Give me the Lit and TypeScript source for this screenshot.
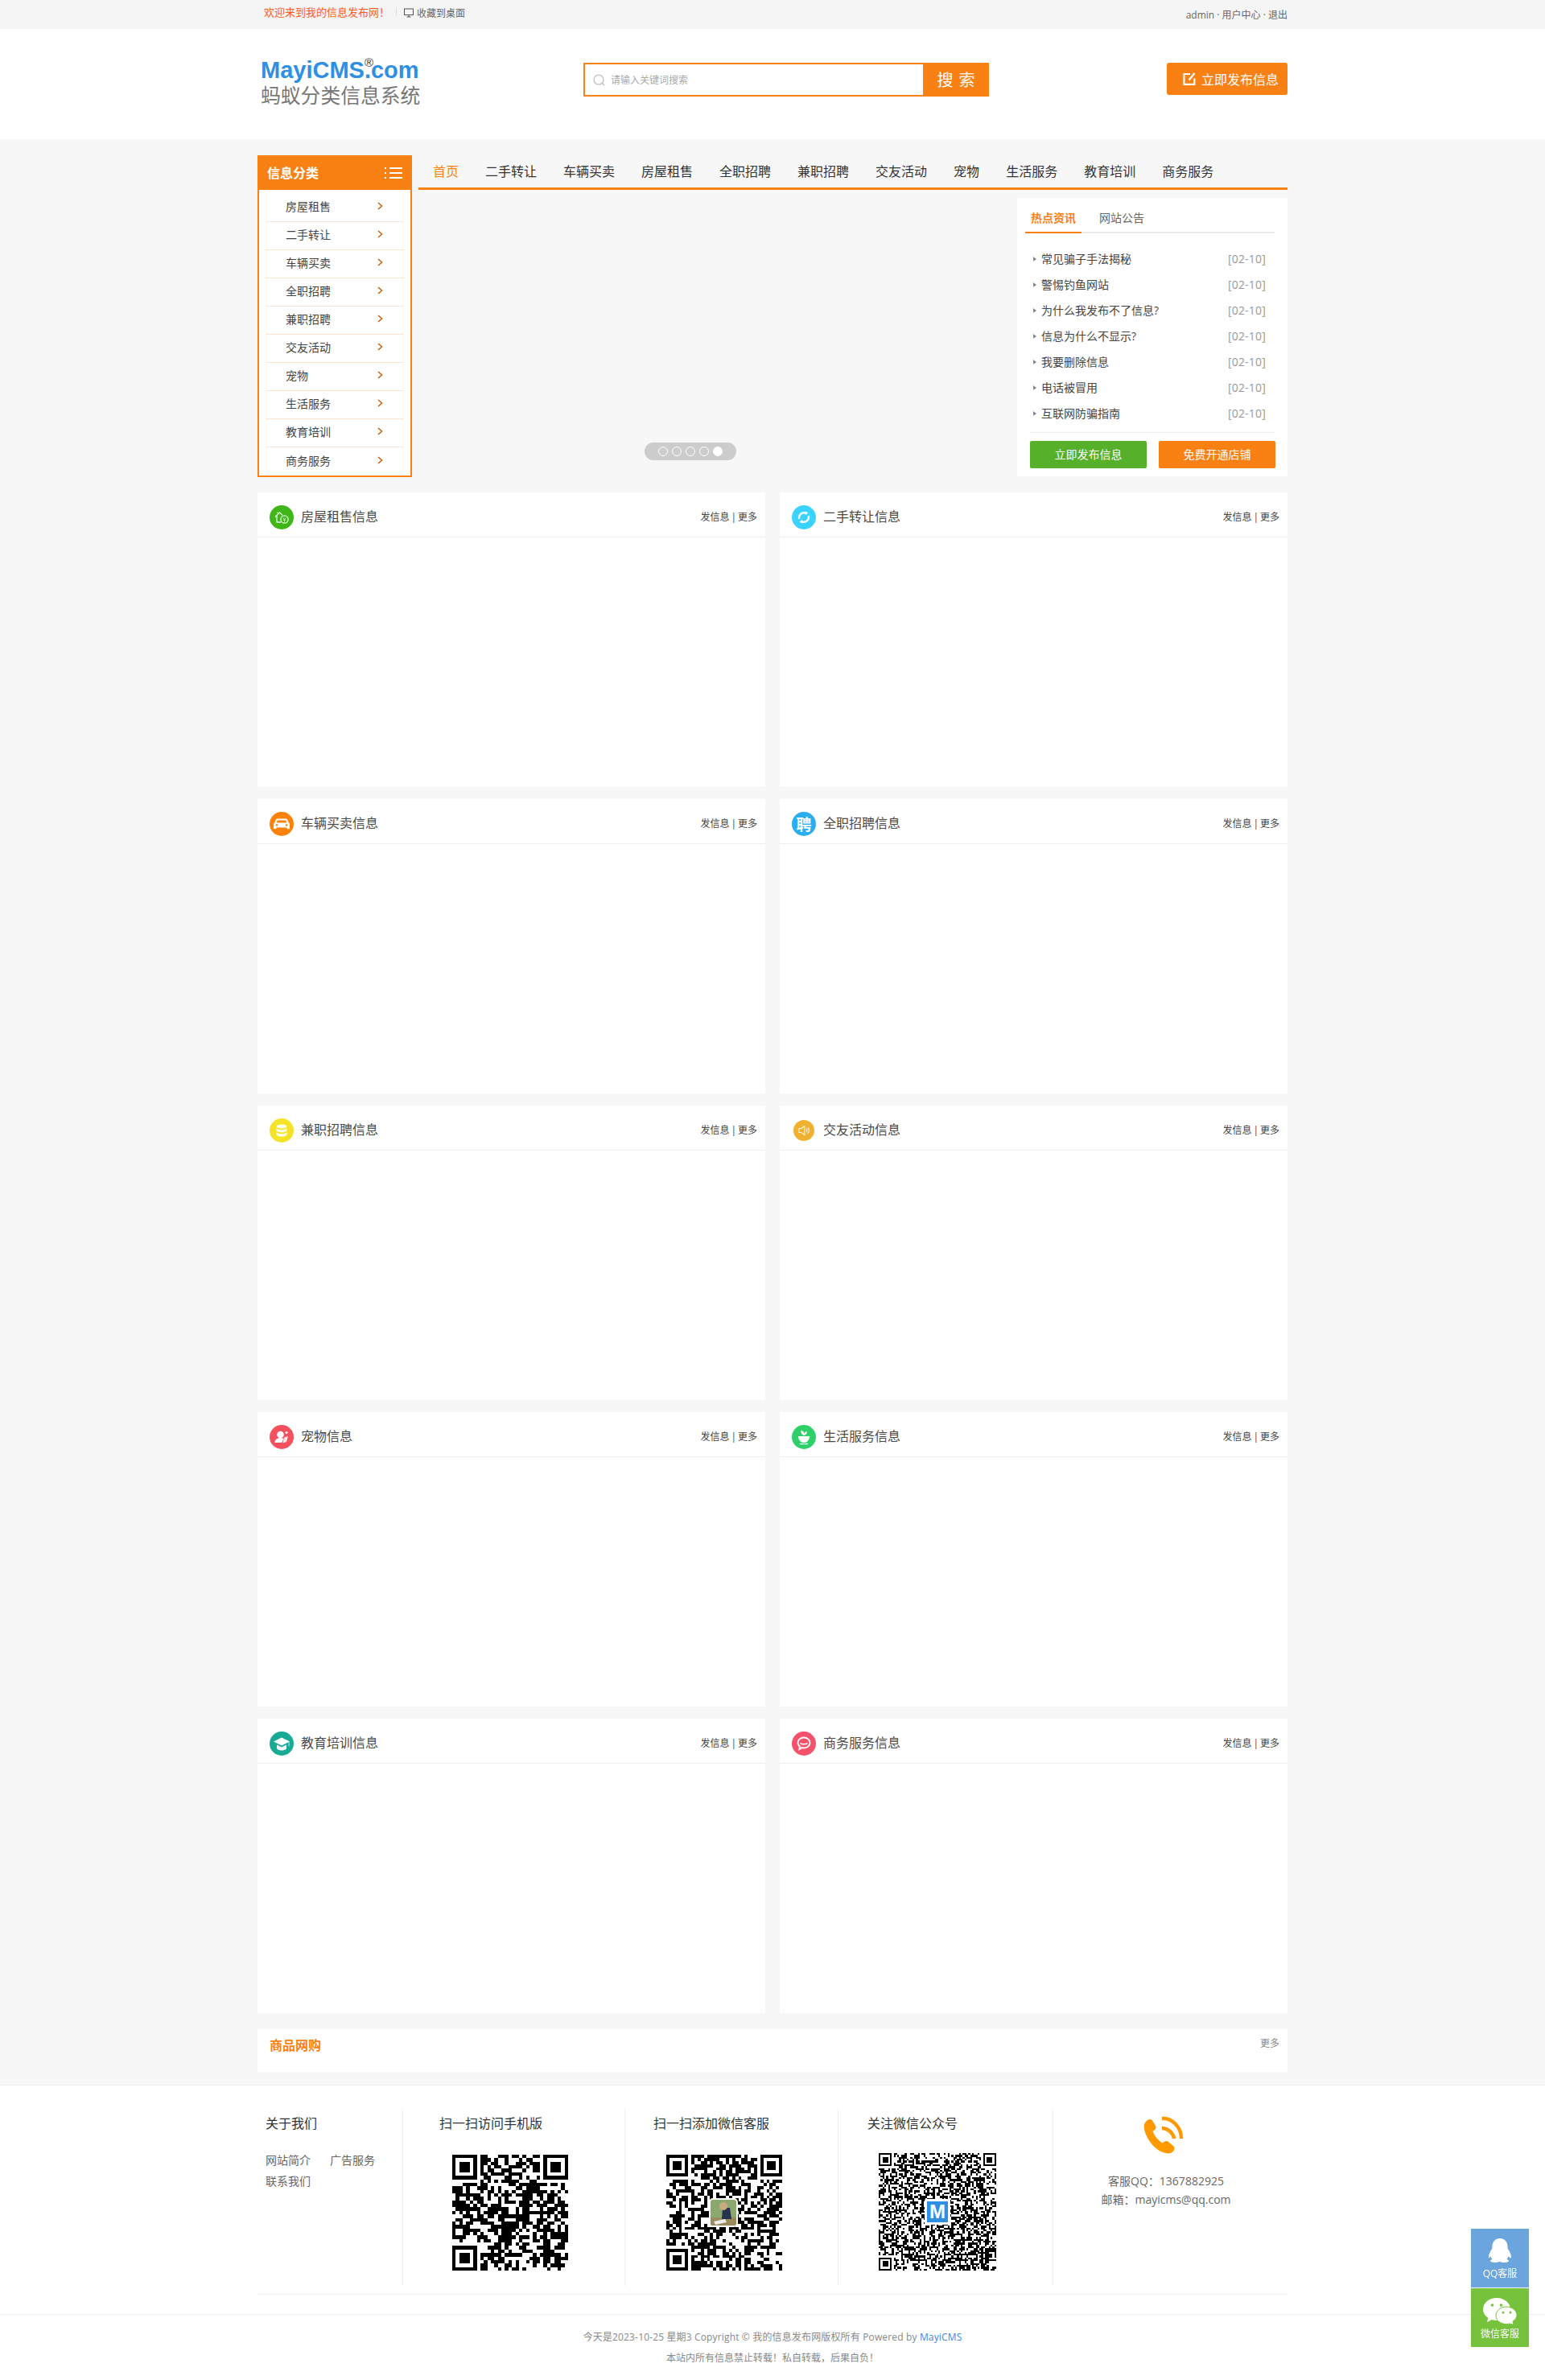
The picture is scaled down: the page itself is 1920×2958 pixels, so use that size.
import { LitElement, html, css, svg } from "lit";
import { customElement } from "lit/decorators.js";

function qrPath(n: number, seed: number, density = 0.5): string {
  let s = seed >>> 0;
  const rnd = () => {
    s = (s + 0x6d2b79f5) >>> 0;
    let t = s;
    t = Math.imul(t ^ (t >>> 15), t | 1);
    t ^= t + Math.imul(t ^ (t >>> 7), t | 61);
    return ((t ^ (t >>> 14)) >>> 0) / 4294967296;
  };
  let d = "";
  const inFinder = (x: number, y: number) =>
    (x < 8 && y < 8) || (x >= n - 8 && y < 8) || (x < 8 && y >= n - 8);
  for (let y = 0; y < n; y++) {
    for (let x = 0; x < n; x++) {
      if (inFinder(x, y)) continue;
      if (rnd() < density) d += `M${x} ${y}h1v1h-1z`;
    }
  }
  const finder = (fx: number, fy: number) => {
    d += `M${fx} ${fy}h7v1h-7zM${fx} ${fy + 6}h7v1h-7zM${fx} ${fy + 1}h1v5h-1zM${fx + 6} ${fy + 1}h1v5h-1zM${fx + 2} ${fy + 2}h3v3h-3z`;
  };
  finder(0, 0);
  finder(n - 7, 0);
  finder(0, n - 7);
  return d;
}

const navItems = ["首页", "二手转让", "车辆买卖", "房屋租售", "全职招聘", "兼职招聘", "交友活动", "宠物", "生活服务", "教育培训", "商务服务"];
const sideItems = ["房屋租售", "二手转让", "车辆买卖", "全职招聘", "兼职招聘", "交友活动", "宠物", "生活服务", "教育培训", "商务服务"];
const news = ["常见骗子手法揭秘", "警惕钓鱼网站", "为什么我发布不了信息?", "信息为什么不显示?", "我要删除信息", "电话被冒用", "互联网防骗指南"];

const cardIcons: Record<string, unknown> = {
  house: svg`<g fill="none" stroke="#fff" stroke-width="1.3" opacity=".85"><path d="M7 14.5 12.5 9l3.5 3.4M9 13v8h5"/><path d="M10 10V8.4"/><circle cx="18.5" cy="17.5" r="4.6"/><path d="M16.8 15.5l1.7 2 1.7-2M18.5 17.5v3M16.8 18.3h3.4" stroke-width=".9"/></g>`,
  sync: svg`<g fill="none" stroke="#fff" stroke-width="2.4" opacity=".95"><path d="M9.3 17a6 6 0 0 1 8.5-7"/><path d="M20.7 13a6 6 0 0 1-8.5 7"/></g><path d="M16.4 7.6l4 1.6-3 3zM13.6 22.4l-4-1.6 3-3z" fill="#fff"/>`,
  car: svg`<path d="M9.5 8.5h11c.8 0 1.3.4 1.6 1l1.6 4c1 .6 1.3 1.2 1.3 2.2v4.8c0 .5-.3.8-.8.8h-1.9c-.5 0-.8-.3-.8-.8v-1H8.500v1c0 .5-.3.8-.8.8H5.800c-.5 0-.8-.3-.8-.8v-4.800c0-1 .3-1.600 1.300-2.200l1.600-4c.3-.6.8-1 1.600-1zM9.800 10.500l-1.200 3h12.800l-1.200-3z" fill="#fff" fill-rule="evenodd"/><circle cx="9" cy="16.500" r="1.300" fill="#ff8208"/><circle cx="21" cy="16.500" r="1.300" fill="#ff8208"/>`,
  db: svg`<g fill="#fff" opacity=".92"><ellipse cx="15" cy="10" rx="6.500" ry="2.600"/><path d="M8.500 12.200c1 1.300 3.500 2 6.500 2s5.500-.7 6.500-2v2.600c0 1.500-2.900 2.600-6.500 2.600s-6.500-1.100-6.500-2.600z"/><path d="M8.500 17.200c1 1.300 3.500 2 6.500 2s5.500-.7 6.500-2v2.800c0 1.500-2.900 2.600-6.500 2.600s-6.500-1.100-6.500-2.600z"/></g>`,
  speaker: svg`<g fill="none" stroke="#fff" stroke-width="1.200" opacity=".9"><path d="M8 12h3.500L16 8.500v13L11.500 18H8z"/><path d="M18.500 12.500a4 4 0 0 1 0 5M20.500 10.500a7 7 0 0 1 0 9"/></g>`,
  pet: svg`<g fill="#fff"><circle cx="13.500" cy="12" r="4.300"/><path d="M6.500 22c0-3.800 3-6 7-6 1.500 0 2.800.3 3.800.9l-2 5.100z"/><path d="M18 15.500l5-1.500-2 7-4.500 1.500z" opacity=".85"/><circle cx="21" cy="9.500" r="1.600"/></g>`,
  life: svg`<g fill="#fff"><path d="M8 14h14c0 4-2.500 7-5 8h-4c-2.500-1-5-4-5-8z"/><path d="M15 13c-3-1-4-3.500-3.500-6 2.500.3 4 2 4 4 .5-1.500 1.700-2.500 3.500-2.700 0 2.200-1.200 4-4 4.700z"/><path d="M10 23h10v1.200H10z"/></g>`,
  edu: svg`<path d="M15 7.500 25 12.500l-10 5-10-5z" fill="#fff"/><path d="M9 16.500v4c0 1.700 2.700 3 6 3s6-1.300 6-3v-4l-6 3z" fill="#fff"/><path d="M24 13v5.500" stroke="#bfeee6" stroke-width="1"/>`,
  biz: svg`<g fill="none" stroke="#fff" stroke-width="1.900"><path d="M7.500 14a7.500 6.500 0 0 1 15 0c0 3.600-3.400 6.500-7.500 6.500-1 0-1.800-.1-2.700-.4L9.500 22l.3-3.500C8.400 17.300 7.500 15.800 7.500 14z"/></g><path d="M10.500 14.500c1.500 1.800 7.500 1.800 9 0" fill="none" stroke="#fff" stroke-width="1.500"/>`,
};

const cards: { title: string; color: string; icon?: string; char?: string; small?: boolean }[] = [
  { title: "房屋租售信息", color: "#3fb618", icon: "house" },
  { title: "二手转让信息", color: "#3ad2ff", icon: "sync" },
  { title: "车辆买卖信息", color: "#ff8208", icon: "car" },
  { title: "全职招聘信息", color: "#2aaef0", char: "聘" },
  { title: "兼职招聘信息", color: "#f5e328", icon: "db" },
  { title: "交友活动信息", color: "#f0b030", icon: "speaker", small: true },
  { title: "宠物信息", color: "#f4505e", icon: "pet" },
  { title: "生活服务信息", color: "#2fd06a", icon: "life" },
  { title: "教育培训信息", color: "#17ab96", icon: "edu" },
  { title: "商务服务信息", color: "#f4526a", icon: "biz" },
];

const qr1 = qrPath(33, 11, 0.56);
const qr2 = qrPath(37, 27, 0.52);
const qr3 = qrPath(63, 93, 0.5);

@customElement("app-root")
export class AppRoot extends LitElement {
  static styles = css`
    :host {
      display: block;
      background: #f7f7f7;
      font-family: "Open Sans", "Noto Sans CJK SC", sans-serif;
      font-size: 12px;
      color: #444;
    }
    * { box-sizing: border-box; }
    .wrap { width: 1280px; margin: 0 auto; }
    .topbar { height: 36px; background: #f5f5f5; }
    .topbar .wrap { display: flex; height: 36px; }
    .welcome { margin-left: 8px; font-size: 13px; line-height: 30px; color: #ff5a22; width: 164px; }
    .sep { width: 1px; height: 10px; background: #ddd; margin-top: 9px; }
    .fav { display: flex; align-items: center; height: 32px; margin-left: 9px; color: #666; gap: 4px; }
    .fav svg { width: 12px; height: 12px; }
    .user { margin-left: auto; line-height: 38px; color: #666; white-space: nowrap; }
    .header { height: 137px; background: #fff; }
    .header .wrap { display: flex; align-items: flex-start; padding-top: 34px; }
    .logo { width: 405px; padding-left: 4px; }
    .logo-en { font-family: "Liberation Sans", sans-serif; font-size: 29px; font-weight: 700; color: #2f8fe3; line-height: 34px; white-space: nowrap; position: relative; }
    .reg { position: absolute; left: 129px; top: -9px; font-size: 15px; font-weight: 400; color: #333; }
    .logo-cn { font-size: 24.8px; line-height: 28px; color: #777; white-space: nowrap; }
    .search { display: flex; width: 504px; height: 42px; margin-top: 8px; border: 2px solid #f98114; background: #fff; }
    .search-in { flex: 1; display: flex; align-items: center; padding-left: 10px; gap: 7px; color: #aaa; }
    .search-in svg { width: 15px; height: 15px; }
    .search-btn { width: 80px; background: #f98114; color: #fff; font-size: 20px; letter-spacing: 1px; display: flex; align-items: center; justify-content: center; padding: 0 0 2px 3px; }
    .publish { margin-left: auto; margin-top: 8px; width: 150px; height: 40px; border-radius: 3px; background: #f98114; color: #fff; font-size: 16px; display: flex; align-items: center; padding: 0 0 1px 20px; gap: 7px; white-space: nowrap; }
    .publish svg { width: 16px; height: 16px; }

    .hero { display: flex; gap: 8px; margin-top: 20px; }
    .side { width: 192px; height: 400px; border: 2px solid #f98114; background: #fff; flex: none; }
    .side-head { margin: -2px -2px 0; height: 43px; background: #f98114; color: #fff; display: flex; align-items: center; justify-content: space-between; padding: 0 12px 1px; font-size: 16px; font-weight: 700; }
    .side-head svg { width: 22px; height: 14px; margin-top: 2px; }
    .side-list { padding-top: 5px; }
    .side-item { height: 35px; margin: 0 8px; border-bottom: 1px solid #fbe3cc; display: flex; align-items: center; justify-content: space-between; padding: 0 26px 4px 25px; font-size: 14px; color: #444; }
    .side-item:last-child { border-bottom: 0; }
    .side-item svg { width: 7px; height: 10px; }
    .hero-main { flex: 1; min-width: 0; }
    .nav { height: 43px; border-bottom: 3px solid #f98114; display: flex; gap: 33px; padding: 0 0 2px 18px; align-items: center; font-size: 16px; color: #333; }
    .nav .on { color: #f98114; }
    .under { display: flex; margin-top: 10px; height: 346px; }
    .banner { flex: 1; position: relative; }
    .dots { position: absolute; left: 281px; top: 304px; width: 114px; height: 22px; border-radius: 11px; background: #ccc; display: flex; justify-content: center; align-items: center; gap: 5px; }
    .dots i { width: 12px; height: 12px; border-radius: 50%; border: 1px solid #fff; }
    .dots i.on { background: #fff; }
    .panel { width: 336px; background: #fff; }
    .tabs { height: 44px; margin: 0 16px 0 10px; border-bottom: 2px solid #e8e8e8; display: flex; gap: 15px; font-size: 14px; color: #666; }
    .tab { width: 70px; height: 44px; line-height: 50px; text-align: center; }
    .tab.on { color: #f98114; font-weight: 700; border-bottom: 2px solid #f98114; }
    .news { margin: 16px 0 7px; }
    .news-row { height: 32px; display: flex; align-items: center; padding: 0 27px 2px 20px; font-size: 14px; color: #444; }
    .news-row i { width: 0; height: 0; border-left: 4px solid #888; border-top: 3px solid transparent; border-bottom: 3px solid transparent; margin: 2px 6px 0 0; }
    .news-row b { font-weight: 400; margin-left: auto; color: #999; letter-spacing: .2px; }
    .btns { width: 306px; margin: 0 15px; border-top: 1px solid #eee; padding: 10px 0 0 1px; display: flex; justify-content: space-between; }
    .btn { width: 145px; height: 34px; border-radius: 2px; color: #fff; font-size: 14px; display: flex; align-items: center; justify-content: center; background: #f98114; padding-bottom: 2px; }
    .btn.g { background: #56b02a; }
    .grid { display: grid; grid-template-columns: 631px 631px; column-gap: 18px; row-gap: 15px; margin-top: 19px; }
    .card { height: 366px; background: #fff; }
    .card-head { height: 56px; border-bottom: 1px solid #eee; display: flex; align-items: center; padding: 6px 10px 0 15px; }
    .ico { width: 30px; height: 30px; border-radius: 50%; display: flex; align-items: center; justify-content: center; color: #fff; font-size: 19px; font-weight: 700; flex: none; }
    .ico svg { width: 30px; height: 30px; display: block; }
    .ico.small { width: 26px; height: 26px; margin: 0 2px; }
    .ico.small svg { width: 26px; height: 26px; }
    .card-title { margin: -3px 0 0 9px; font-size: 16px; color: #4a4a4a; }
    .card-more { margin: -2px 0 0 auto; color: #444; white-space: nowrap; word-spacing: -1.200px; }
    .shop { height: 53px; margin-top: 20px; background: #fff; display: flex; justify-content: space-between; padding: 0 10px 15px 15px; align-items: center; }
    .shop-t { font-size: 16px; font-weight: 700; color: #f98114; }
    .shop-m { color: #888; margin-top: -4px; }
    .footer { margin-top: 16px; background: #fff; border-top: 1px solid #eee; padding-top: 29px; }
    .cols { display: flex; height: 220px; }
    .col { border-right: 1px solid #eee; flex: none; }
    .c1 { width: 181px; padding-left: 10px; }
    .c2 { width: 276px; }
    .c3 { width: 265px; }
    .c4 { width: 267px; }
    .c5 { flex: 1; border-right: 0; display: flex; flex-direction: column; align-items: center; color: #666; font-size: 14px; line-height: 23px; padding: 9px 11px 0 0; }
    .c5 svg { width: 50px; height: 49px; margin: 0 6px 20px 0; }
    .col-t { font-size: 16px; color: #333; line-height: 36px; white-space: nowrap; }
    .links { display: flex; flex-wrap: wrap; width: 150px; column-gap: 24px; font-size: 14px; line-height: 26px; color: #666; margin-top: 15px; }
    .qr { position: relative; display: block; width: 144px; height: 144px; }
    .qr svg { width: 100%; height: 100%; display: block; }
    .c2 .col-t { padding-left: 45px; }
    .c2 .qr { margin: 21px 0 0 61px; }
    .c3 .col-t { padding-left: 35px; }
    .c3 .qr { margin: 21px 0 0 51px; }
    .c4 .col-t { padding-left: 36px; }
    .c4 .qr { margin: 19px 0 0 50px; width: 146px; height: 146px; }
    .avatar { position: absolute; left: 53px; top: 54px; width: 36px; height: 36px; border-radius: 5px; border: 2px solid #fff; overflow: hidden; background: #fff; }
    .avatar svg { width: 100%; height: 100%; }
    .mlogo { position: absolute; left: 57px; top: 57px; width: 32px; height: 32px; border: 3px solid #fff; border-radius: 2px; background: #2f8fe3; color: #fff; font-size: 24px; font-weight: 700; line-height: 26px; text-align: center; font-family: "Liberation Sans", sans-serif; }
    .rule { height: 1px; background: #eee; margin-top: 10px; }
    .copy { margin-top: 24px; border-top: 1px solid #eee; padding: 15px 0 14px; text-align: center; color: #888; line-height: 26px; }
    .copy-main { letter-spacing: .15px; }
    .copy a { color: #3b86e8; text-decoration: none; }
    .float { position: fixed; right: 20px; bottom: 41px; width: 72px; display: flex; flex-direction: column; gap: 1px; color: #fff; }
    .fl { height: 73px; display: flex; flex-direction: column; align-items: center; color: #fff; }
    .fl.q { background: #6ba5dd; padding-top: 12px; gap: 4px; }
    .fl.w { background: #76c23d; padding-top: 12px; gap: 2px; }
    .fl.q svg { width: 28px; height: 30px; }
    .fl.w svg { width: 42px; height: 33px; }
  `;

  render() {
    return html`
      <div class="topbar"><div class="wrap">
        <div class="welcome">欢迎来到我的信息发布网！</div>
        <div class="sep"></div>
        <div class="fav">
          <svg viewBox="0 0 12 12" fill="none" stroke="#555" stroke-width="1"><rect x=".5" y="1" width="11" height="7.500"/><path d="M6 8.500V11M3.500 11h5"/></svg>
          <span>收藏到桌面</span>
        </div>
        <div class="user">admin · 用户中心 · 退出</div>
      </div></div>

      <div class="header"><div class="wrap">
        <div class="logo">
          <div class="logo-en">MayiCMS<span class="reg">®</span>.com</div>
          <div class="logo-cn">蚂蚁分类信息系统</div>
        </div>
        <div class="search">
          <div class="search-in">
            <svg viewBox="0 0 15 15" fill="none" stroke="#bbb" stroke-width="1.200"><circle cx="7" cy="7" r="6"/><path d="M11.300 11.300 14 14"/></svg>
            <span>请输入关键词搜索</span>
          </div>
          <div class="search-btn">搜 索</div>
        </div>
        <div class="publish">
          <svg viewBox="0 0 16 16" fill="none" stroke="#fff" stroke-width="2.200"><path d="M9 2H1.500v12.800h12.800V7.500"/><path d="M7.500 9.500 14.500 1"/></svg>
          <span>立即发布信息</span>
        </div>
      </div></div>

      <div class="wrap">
        <div class="hero">
          <div class="side">
            <div class="side-head">
              <span>信息分类</span>
              <svg viewBox="0 0 22 14" fill="#fff"><rect x="0" y="0" width="2" height="2"/><rect x="0" y="6" width="2" height="2"/><rect x="0" y="12" width="2" height="2"/><rect x="6" y="0" width="16" height="2"/><rect x="6" y="6" width="16" height="2"/><rect x="6" y="12" width="16" height="2"/></svg>
            </div>
            <div class="side-list">
              ${sideItems.map(
                (t) => html`<div class="side-item"><span>${t}</span>
                  <svg viewBox="0 0 7 10" fill="none" stroke="#c8600f" stroke-width="1.500"><path d="M1 1l4.500 4L1 9"/></svg></div>`
              )}
            </div>
          </div>
          <div class="hero-main">
            <div class="nav">
              ${navItems.map((t, i) => html`<span class=${i === 0 ? "on" : ""}>${t}</span>`)}
            </div>
            <div class="under">
              <div class="banner">
                <div class="dots"><i></i><i></i><i></i><i></i><i class="on"></i></div>
              </div>
              <div class="panel">
                <div class="tabs">
                  <div class="tab on">热点资讯</div>
                  <div class="tab">网站公告</div>
                </div>
                <div class="news">
                  ${news.map((t) => html`<div class="news-row"><i></i><span>${t}</span><b>[02-10]</b></div>`)}
                </div>
                <div class="btns">
                  <div class="btn g">立即发布信息</div>
                  <div class="btn">免费开通店铺</div>
                </div>
              </div>
            </div>
          </div>
        </div>

        <div class="grid">
          ${cards.map(
            (c) => html`<div class="card">
              <div class="card-head">
                <div class="ico ${c.small ? "small" : ""}" style="background:${c.color}">
                  ${c.char ? c.char : html`<svg viewBox="0 0 30 30">${cardIcons[c.icon!]}</svg>`}
                </div>
                <div class="card-title">${c.title}</div>
                <div class="card-more">发信息 | 更多</div>
              </div>
            </div>`
          )}
        </div>

        <div class="shop">
          <div class="shop-t">商品网购</div>
          <div class="shop-m">更多</div>
        </div>
      </div>

      <div class="footer">
        <div class="wrap">
          <div class="cols">
            <div class="col c1">
              <div class="col-t">关于我们</div>
              <div class="links"><span>网站简介</span><span>广告服务</span><span>联系我们</span></div>
            </div>
            <div class="col c2">
              <div class="col-t">扫一扫访问手机版</div>
              <div class="qr"><svg viewBox="0 0 33 33" shape-rendering="crispEdges"><path d=${qr1}></path></svg></div>
            </div>
            <div class="col c3">
              <div class="col-t">扫一扫添加微信客服</div>
              <div class="qr">
                <svg viewBox="0 0 37 37" shape-rendering="crispEdges"><path d=${qr2}></path></svg>
                <div class="avatar">
                  <svg viewBox="0 0 32 32"><rect width="32" height="32" fill="#8aa870"></rect><rect y="22" width="32" height="10" fill="#9b8a5c"></rect><path d="M15 10h9l2 14H14z" fill="#26324f"></path><circle cx="16" cy="8" r="5" fill="#c9ab82"></circle><path d="M4 27l14-3 2 4-14 3z" fill="#eee"></path></svg>
                </div>
              </div>
            </div>
            <div class="col c4">
              <div class="col-t">关注微信公众号</div>
              <div class="qr">
                <svg viewBox="0 0 63 63" shape-rendering="crispEdges"><path d=${qr3}></path></svg>
                <div class="mlogo">M</div>
              </div>
            </div>
            <div class="col c5">
              <svg viewBox="0 0 50 49" fill="#f90">
                <path d="M5 5c2-1.500 4.500-1.500 6 .5l4 6.500c1 1.800.5 3.800-1 5l-2.500 2c2 5.500 6.500 11 12 14.500l2.500-1.800c1.500-1 3.500-1 5 .3l6.500 5.500c1.500 1.500 1.500 4-.3 6-2.500 2.500-5.500 3.500-9 2.500C15 44 2.500 28 .8 14.500.3 10.500 2 7 5 5z"></path>
                <path d="M23 3c12-1 24 10 24 25M23 15c6 0 14 5 15 13" fill="none" stroke="#f90" stroke-width="4.500"></path>
              </svg>
              <div>客服QQ：1367882925</div>
              <div>邮箱：mayicms@qq.com</div>
            </div>
          </div>
          <div class="rule"></div>
        </div>
        <div class="copy">
          <div class="copy-main">今天是2023-10-25 星期3 Copyright © 我的信息发布网版权所有 Powered by <a>MayiCMS</a></div>
          <div>本站内所有信息禁止转载！私自转载，后果自负！</div>
        </div>
      </div>

      <div class="float">
        <div class="fl q">
          <svg viewBox="0 0 28 30" fill="#fff"><path d="M14 0c6 0 9.500 4.500 9.500 10 0 1.500.2 2.500 1 4 1.500 2.500 3.500 6 3.500 9 0 1.500-.8 1.800-2 .8-.5-.4-1-1-1.400-1.600-.4 1.500-1.200 2.800-2.200 3.800 1.500.5 2.600 1.200 2.600 2 0 1.200-3 2-6 2-2 0-3.500-.4-4.500-1-.5.100-1.500.100-2 0-1 .6-2.500 1-4.500 1-3 0-6-.8-6-2 0-.8 1.100-1.500 2.600-2-1-1-1.800-2.300-2.200-3.800-.4.600-.9 1.200-1.400 1.600C1 24.800 0 24.500 0 23c0-3 2-6.500 3.500-9 .8-1.500 1-2.500 1-4C4.500 4.500 8 0 14 0z"></path></svg>
          <span>QQ客服</span>
        </div>
        <div class="fl w">
          <svg viewBox="0 0 42 33">
            <path d="M17 0C7.700 0 0 6.200 0 14c0 4.400 2.500 8.300 6.300 10.900L5 30l6-3c2 .6 3.900 1 6 1 9.300 0 17-6.300 17-14S26.300 0 17 0z" fill="#fff"></path>
            <circle cx="11.500" cy="9" r="1.800" fill="#76c23d"></circle><circle cx="22.500" cy="9" r="1.800" fill="#76c23d"></circle>
            <path d="M29 11c-7.200 0-13 5-13 11s5.800 10.500 13 10.500c1.500 0 3-.2 4.300-.6L38 33.500l-1-4.300c3-2 5-4.800 5-7.700 0-6-5.800-10.500-13-10.500z" fill="#fff" stroke="#76c23d" stroke-width="1"></path>
            <circle cx="25" cy="18" r="1.500" fill="#76c23d"></circle><circle cx="34" cy="18" r="1.500" fill="#76c23d"></circle>
          </svg>
          <span>微信客服</span>
        </div>
      </div>
    `;
  }
}
